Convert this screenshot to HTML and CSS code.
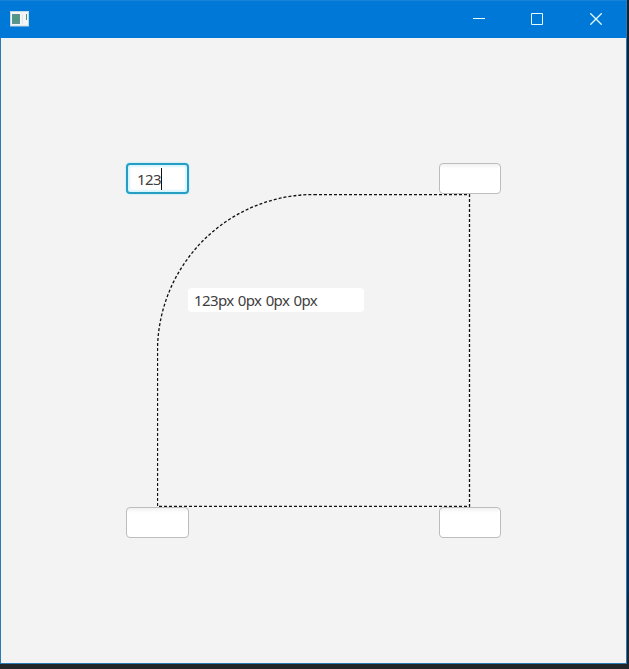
FILE: index.html
```html
<!DOCTYPE html>
<html lang="en">
<head>
<meta charset="utf-8">
<title>Border radius</title>
<link rel="stylesheet" href="styles.css">
</head>
<body>
<div class="window">
  <header class="titlebar">
    <svg class="app-icon" width="19" height="16" viewBox="0 0 19 16">
      <rect x=".5" y=".5" width="18" height="14.500" fill="#f1f5f6" stroke="#c4d8e4"/>
      <rect x="2" y="3" width="8" height="10" fill="#648f9b"/>
      <rect x="3" y="4" width="6" height="8" fill="#4f9983"/>
      <path d="M12.5 3v10" stroke="#e2e4e5"/>
      <path d="M16.5 3v6" stroke="#52917c"/>
    </svg>
    <div class="controls">
      <svg width="12" height="12" viewBox="0 0 12 12"><path d="M0 5.5h12"/></svg>
      <svg width="12" height="12" viewBox="0 0 12 12"><path d="M.5.5h11v11H.5z"/></svg>
      <svg class="close" width="12" height="12" viewBox="0 0 12 12"><path d="M.3.3l11.4 11.4M11.7.3L.3 11.7"/></svg>
    </div>
  </header>
  <main class="stage">
    <div class="corners"><div class="field focused">123<i class="caret"></i></div><div class="field"></div></div>
    <div class="preview">
      <svg class="outline" width="314" height="313" viewBox="0 0 314 313"><path d="M157 .5H312.5V312.5H.5V157A156.500 156.500 0 0 1 157 .5z"/></svg>
      <div class="output">123px 0px 0px 0px</div>
    </div>
    <div class="corners"><div class="field"></div><div class="field"></div></div>
  </main>
</div>
</body>
</html>
```
FILE: styles.css
```css
* { box-sizing: border-box; }
body {
  margin: 0;
  height: 669px;
  overflow: hidden;
  background: linear-gradient(#102333, #082b50 590px, #102333 600px, #222628 664px);
  font: 15px/20px "Noto Sans", sans-serif;
  letter-spacing: -.6px;
  word-spacing: .9px;
  color: #404040;
}
.window {
  width: 627px;
  height: 664px;
  background: #f3f3f3;
  border: 1px solid #287bb5;
  border-top-color: #1683d8;
}
.titlebar {
  display: flex;
  justify-content: space-between;
  height: 37px;
  margin: 0 -1px;
  padding: 10px 24px 0 10px;
  background: #0078d7;
  border-right: 1px solid #287bb5;
}
.controls { display: flex; gap: 46px; padding-top: 2px; }
.controls svg { fill: none; stroke: #e4ffff; }
.controls .close { margin-left: 1px; stroke-width: 1.3; }
.stage { width: 375px; margin: 125px 0 0 125px; }
.corners { display: flex; justify-content: space-between; }
.field {
  display: flex;
  align-items: center;
  width: 62.5px;
  height: 31px;
  padding-left: 11px;
  background: linear-gradient(#f1f1f1, #fff 5px);
  border: 1px solid #bdbdbd;
  border-radius: 4px;
}
.focused {
  padding-left: 9px;
  background: #fff;
  border: 2px solid #269ec4;
  box-shadow: 0 0 1px 1px #d2eff8, inset 0 0 2px 2px #d8f5fc;
}
.caret { width: 1px; height: 22px; background: #111; }
.preview { height: 313px; margin-left: 31px; padding-top: 94px; position: relative; }
.outline { position: absolute; left: 0; top: 0; fill: none; stroke: #111; stroke-width: 1.3; stroke-dasharray: 3 2; }
.output {
  position: relative;
  width: 176px;
  height: 24px;
  margin-left: 31px;
  padding: 3px 6px;
  line-height: 19px;
  background: #fff;
  border-radius: 4px;
}
```
